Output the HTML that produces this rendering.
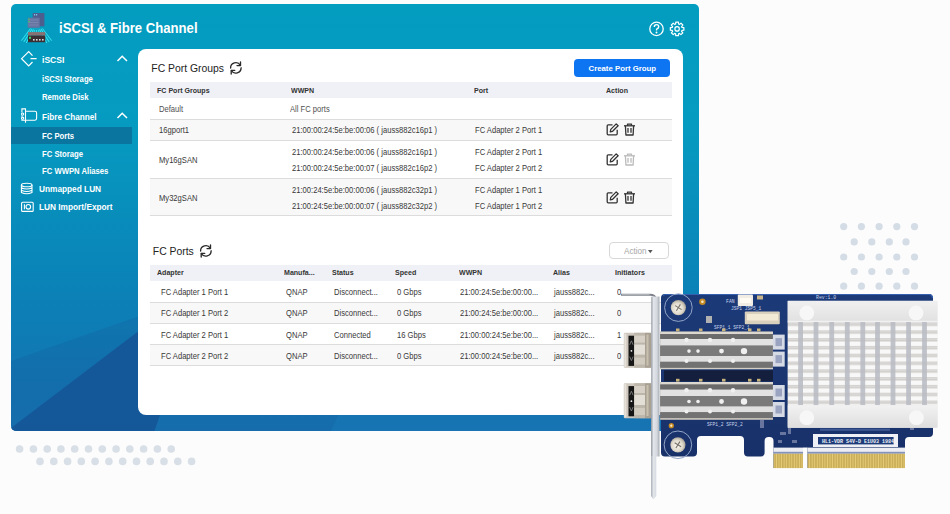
<!DOCTYPE html>
<html><head><meta charset="utf-8">
<style>
*{margin:0;padding:0;box-sizing:border-box}
html,body{width:950px;height:514px;overflow:hidden;background:#fcfcfc;font-family:"Liberation Sans",sans-serif}
.a{position:absolute;white-space:nowrap;transform-origin:0 0}
#panel{position:absolute;left:11px;top:4px;width:688px;height:427px;border-radius:5px;overflow:hidden;
 background:linear-gradient(180deg,#039dc0 0px,#069ac0 130px,#0a84b8 270px,#1275b2 380px,#1874b3 427px)}
.sb{color:#fff;font-weight:bold}
#card{position:absolute;left:138px;top:49px;width:545px;height:366px;border-radius:8px;background:#fff}
.hd{background:#eff1f6}
.ht{font-weight:bold;color:#333;font-size:8px;line-height:8px}
.tt{color:#444;font-size:7.6px;line-height:8px}
.gr{background:#f8f8f8}
.dv{position:absolute;height:1px;background:#dcdcdc;z-index:2}
</style></head><body>
<svg class="a" style="left:0;top:0" width="950" height="514">
<circle cx="843.7" cy="226.6" r="3.6" fill="#d4dce5"/>
<circle cx="861.4" cy="226.6" r="3.6" fill="#d4dce5"/>
<circle cx="879.1" cy="226.6" r="3.6" fill="#d4dce5"/>
<circle cx="896.8" cy="226.6" r="3.6" fill="#d4dce5"/>
<circle cx="914.5" cy="226.6" r="3.6" fill="#d4dce5"/>
<circle cx="854.2" cy="241.9" r="3.6" fill="#d4dce5"/>
<circle cx="871.8" cy="241.9" r="3.6" fill="#d4dce5"/>
<circle cx="889.3" cy="241.9" r="3.6" fill="#d4dce5"/>
<circle cx="906" cy="241.9" r="3.6" fill="#d4dce5"/>
<circle cx="843.7" cy="257" r="3.6" fill="#d4dce5"/>
<circle cx="861.4" cy="257" r="3.6" fill="#d4dce5"/>
<circle cx="879.1" cy="257" r="3.6" fill="#d4dce5"/>
<circle cx="896.8" cy="257" r="3.6" fill="#d4dce5"/>
<circle cx="914.5" cy="257" r="3.6" fill="#d4dce5"/>
<circle cx="854.2" cy="271.5" r="3.6" fill="#d4dce5"/>
<circle cx="871.8" cy="271.5" r="3.6" fill="#d4dce5"/>
<circle cx="889.3" cy="271.5" r="3.6" fill="#d4dce5"/>
<circle cx="906" cy="271.5" r="3.6" fill="#d4dce5"/>
<circle cx="843.7" cy="286.2" r="3.6" fill="#d4dce5"/>
<circle cx="861.4" cy="286.2" r="3.6" fill="#d4dce5"/>
<circle cx="879.1" cy="286.2" r="3.6" fill="#d4dce5"/>
<circle cx="896.8" cy="286.2" r="3.6" fill="#d4dce5"/>
<circle cx="914.5" cy="286.2" r="3.6" fill="#d4dce5"/>
<circle cx="19.6" cy="449" r="3.8" fill="#d8dfe6"/>
<circle cx="33.4" cy="449" r="3.8" fill="#d8dfe6"/>
<circle cx="47.2" cy="449" r="3.8" fill="#d8dfe6"/>
<circle cx="60.9" cy="449" r="3.8" fill="#d8dfe6"/>
<circle cx="74.7" cy="449" r="3.8" fill="#d8dfe6"/>
<circle cx="88.5" cy="449" r="3.8" fill="#d8dfe6"/>
<circle cx="102.3" cy="449" r="3.8" fill="#d8dfe6"/>
<circle cx="116.1" cy="449" r="3.8" fill="#d8dfe6"/>
<circle cx="129.8" cy="449" r="3.8" fill="#d8dfe6"/>
<circle cx="143.6" cy="449" r="3.8" fill="#d8dfe6"/>
<circle cx="157.4" cy="449" r="3.8" fill="#d8dfe6"/>
<circle cx="171.2" cy="449" r="3.8" fill="#d8dfe6"/>
<circle cx="40.0" cy="461.4" r="3.8" fill="#d8dfe6"/>
<circle cx="53.8" cy="461.4" r="3.8" fill="#d8dfe6"/>
<circle cx="67.6" cy="461.4" r="3.8" fill="#d8dfe6"/>
<circle cx="81.3" cy="461.4" r="3.8" fill="#d8dfe6"/>
<circle cx="95.1" cy="461.4" r="3.8" fill="#d8dfe6"/>
<circle cx="108.9" cy="461.4" r="3.8" fill="#d8dfe6"/>
<circle cx="122.7" cy="461.4" r="3.8" fill="#d8dfe6"/>
<circle cx="136.5" cy="461.4" r="3.8" fill="#d8dfe6"/>
<circle cx="150.2" cy="461.4" r="3.8" fill="#d8dfe6"/>
<circle cx="164.0" cy="461.4" r="3.8" fill="#d8dfe6"/>
<circle cx="177.8" cy="461.4" r="3.8" fill="#d8dfe6"/>
<circle cx="191.6" cy="461.4" r="3.8" fill="#d8dfe6"/>
</svg>
<div id="panel">
 <svg class="a" style="left:0;top:0" width="688" height="427">
  <polygon points="0,357 420,210 320,427 0,427" fill="#145f9c" opacity="0.28"/>
  <polygon points="0,424 179,288 191,288 143.5,427 0,427" fill="#15589a"/>
 </svg>
</div>

<!-- header -->
<svg class="a" style="left:18px;top:10px" width="36" height="36" viewBox="0 0 36 36">
 <g stroke="#35e6f0" stroke-width="1" fill="none">
  <path d="M12.5 18.5 L3.5 30.5" opacity="0.9"/><path d="M14 19 L5.8 32"/><path d="M15.5 19.5 L8.2 33"/>
  <path d="M24.5 18.5 L33.5 30.5" opacity="0.9"/><path d="M23 19 L31.2 32"/><path d="M21.5 19.5 L28.8 33"/>
  <path d="M16.5 20 L16 23 M18.5 20 V23 M20.5 20 L21 23" stroke-width="0.8"/>
 </g>
 <path d="M12 18 L24.5 18 L35 31 L2 31 Z" fill="#3ef0f0" opacity="0.12"/>
 <rect x="14.7" y="3" width="11.7" height="13.3" fill="#4d5d8e"/>
 <rect x="16" y="4.2" width="1.2" height="1.2" fill="#7fe0ff"/><rect x="18" y="4.2" width="1.2" height="1.2" fill="#7fe0ff"/>
 <rect x="9.7" y="7.7" width="12" height="10.1" fill="#6574a0"/>
 <path d="M10.5 10h10M10.5 12.5h10M10.5 15h10" stroke="#8592b8" stroke-width="0.6"/>
 <rect x="10.3" y="8.5" width="1.3" height="1.3" fill="#3cd26a"/><rect x="10.3" y="11" width="1.3" height="1.3" fill="#3cd26a"/>
 <rect x="10" y="22.1" width="17.2" height="3.5" fill="#8a7070"/>
 <rect x="10" y="25.6" width="17.2" height="6.6" fill="#3b2f33"/>
 <rect x="11" y="26.8" width="2" height="2" fill="#3cd26a"/>
 <g fill="#ddd"><rect x="15" y="29" width="1.6" height="1.6"/><rect x="18" y="29" width="1.6" height="1.6"/><rect x="21" y="29" width="1.6" height="1.6"/><rect x="24" y="29" width="1.6" height="1.6"/></g>
</svg>
<div class="a sb" style="left:59px;top:21px;font-size:14.5px;line-height:14.5px;transform:scaleX(0.905)">iSCSI &amp; Fibre Channel</div>
<svg class="a" style="left:646px;top:20px" width="42" height="20" viewBox="0 0 42 20">
 <circle cx="10.5" cy="8.9" r="6.7" fill="none" stroke="#fff" stroke-width="1.3"/>
 <path d="M8.3 6.9 Q8.3 4.6 10.5 4.6 Q12.7 4.6 12.7 6.7 Q12.7 8.1 11 8.9 Q10.5 9.2 10.5 10.5" fill="none" stroke="#fff" stroke-width="1.4"/>
 <circle cx="10.5" cy="12.5" r="0.95" fill="#fff"/>
 <g transform="translate(31.1 8.9)" fill="none" stroke="#fff" stroke-width="1.2" stroke-linejoin="round">
  <path d="M-1.49 -4.88 L-1.32 -6.77 L1.32 -6.77 L1.49 -4.88 L2.39 -4.50 L3.86 -5.72 L5.72 -3.86 L4.50 -2.39 L4.88 -1.49 L6.77 -1.32 L6.77 1.32 L4.88 1.49 L4.50 2.39 L5.72 3.86 L3.86 5.72 L2.39 4.50 L1.49 4.88 L1.32 6.77 L-1.32 6.77 L-1.49 4.88 L-2.39 4.50 L-3.86 5.72 L-5.72 3.86 L-4.50 2.39 L-4.88 1.49 L-6.77 1.32 L-6.77 -1.32 L-4.88 -1.49 L-4.50 -2.39 L-5.72 -3.86 L-3.86 -5.72 L-2.39 -4.50 Z"/>
  <circle r="2.2"/>
 </g>
</svg>
<!-- sidebar -->
<div class="a" style="left:11px;top:127.3px;width:121px;height:17px;background:#0a76a0"></div>
<svg class="a" style="left:18px;top:48px" width="24" height="170" viewBox="0 0 24 170">
 <g fill="none" stroke="#fff" stroke-width="1.2">
  <path d="M14.5 7.6 L10.7 3.6 L3.6 10.7 L10.7 17.8 L14.5 14 M12.5 10.7 H18.6"/>
 </g>
 <g fill="none" stroke="#fff" stroke-width="1.1">
  <path d="M7.5 63.3 H17 Q18.6 63.3 18.6 64.9 V70.6 Q18.6 72.2 17 72.2 H7.5"/>
  <path d="M7.5 60.3 V74.8 M7.5 60.9 H3.9 V64.6 M3.9 67.6 V68.8 M3.9 71.6 V72.3 H7.5"/>
  <circle cx="4.6" cy="66.1" r="1.1"/><circle cx="4.6" cy="70.2" r="1.1"/>
 </g>
 <g fill="none" stroke="#fff" stroke-width="1.1">
  <ellipse cx="8.7" cy="137" rx="5.3" ry="1.8"/>
  <path d="M3.4 137 V144.5 Q8.7 147 14 144.5 V137 M3.4 139.8 Q8.7 142.3 14 139.8 M3.4 142.2 Q8.7 144.7 14 142.2"/>
 </g>
 <g fill="none" stroke="#fff" stroke-width="1.1">
  <rect x="3.6" y="154.2" width="11.6" height="9.2" rx="1"/>
  <circle cx="10.3" cy="158.8" r="2.3"/>
  <path d="M6.4 156.3 v5" />
 </g>
</svg>
<svg class="a" style="left:112px;top:50px" width="20" height="80" viewBox="0 0 20 80">
 <path d="M5.5 11 L10.2 6.2 L15 11" fill="none" stroke="#fff" stroke-width="1.5"/>
 <path d="M5.5 68 L10.2 63.2 L15 68" fill="none" stroke="#fff" stroke-width="1.5"/>
</svg>
<div class="a sb" style="left:42px;top:55px;font-size:9.5px;line-height:9.5px;transform:scaleX(0.9)">iSCSI</div>
<div class="a sb" style="left:42px;top:75px;font-size:8.5px;line-height:8.5px;transform:scaleX(0.905)">iSCSI Storage</div>
<div class="a sb" style="left:42px;top:92.5px;font-size:8.5px;line-height:8.5px;transform:scaleX(0.905)">Remote Disk</div>
<div class="a sb" style="left:42px;top:112px;font-size:9.5px;line-height:9.5px;transform:scaleX(0.86)">Fibre Channel</div>
<div class="a sb" style="left:42px;top:132px;font-size:8.5px;line-height:8.5px;transform:scaleX(0.905)">FC Ports</div>
<div class="a sb" style="left:42px;top:149.8px;font-size:8.5px;line-height:8.5px;transform:scaleX(0.905)">FC Storage</div>
<div class="a sb" style="left:42px;top:167.4px;font-size:8.5px;line-height:8.5px;transform:scaleX(0.905)">FC WWPN Aliases</div>
<div class="a sb" style="left:39px;top:185px;font-size:9px;line-height:9px;transform:scaleX(0.92)">Unmapped LUN</div>
<div class="a sb" style="left:39px;top:203.3px;font-size:9px;line-height:9px;transform:scaleX(0.92)">LUN Import/Export</div>
<div id="card"></div>
<div class="a " style="left:151.3px;top:64.4px;font-size:10.4px;line-height:10.4px;color:#222;">FC Port Groups</div>
<svg class="a" style="left:229px;top:61px" width="14" height="14" viewBox="0 0 14 14"><g fill="none" stroke="#2a2a2a" stroke-width="1.35" stroke-linecap="round" stroke-linejoin="round"><path d="M1.6 7 A5.2 5.2 0 0 1 11.3 4.3"/><path d="M11.5 1 V4.6 H8"/><path d="M12.1 6.8 A5.2 5.2 0 0 1 2.4 9.5"/><path d="M2.2 13 V9.4 H5.7"/></g></svg>
<div class="a" style="left:574px;top:59px;width:95.8px;height:17.7px;border-radius:4px;background:#0d74f2"></div>
<div class="a " style="left:588.5px;top:64.6px;font-size:7.8px;line-height:7.8px;color:#fff;font-weight:bold;">Create Port Group</div>
<div class="a hd" style="left:150px;top:82px;width:522px;height:16.3px"></div>
<div class="a ht" style="left:157px;top:86.74px;font-size:7.6px;line-height:7.6px;transform:scaleX(0.93);">FC Port Groups</div>
<div class="a ht" style="left:290.5px;top:86.74px;font-size:7.6px;line-height:7.6px;transform:scaleX(0.93);">WWPN</div>
<div class="a ht" style="left:473.5px;top:86.74px;font-size:7.6px;line-height:7.6px;transform:scaleX(0.93);">Port</div>
<div class="a ht" style="left:606.2px;top:86.74px;font-size:7.6px;line-height:7.6px;transform:scaleX(0.93);">Action</div>
<div class="a gr" style="left:150px;top:119px;width:522px;height:21px"></div>
<div class="a gr" style="left:150px;top:178px;width:522px;height:37px"></div>
<div class="dv" style="left:150px;top:119px;width:522px"></div>
<div class="dv" style="left:150px;top:140px;width:522px"></div>
<div class="dv" style="left:150px;top:178px;width:522px"></div>
<div class="dv" style="left:150px;top:215px;width:522px"></div>
<div class="a " style="left:158.8px;top:104.79px;font-size:8.6px;line-height:8.6px;color:#505050;transform:scaleX(0.885);">Default</div>
<div class="a " style="left:290px;top:104.79px;font-size:8.6px;line-height:8.6px;color:#505050;transform:scaleX(0.885);">All FC ports</div>
<div class="a " style="left:158.9px;top:126.49px;font-size:8.6px;line-height:8.6px;color:#383838;transform:scaleX(0.885);">16gport1</div>
<div class="a " style="left:291.8px;top:126.49px;font-size:8.6px;line-height:8.6px;color:#383838;transform:scaleX(0.885);">21:00:00:24:5e:be:00:06 ( jauss882c16p1 )</div>
<div class="a " style="left:475.4px;top:126.49px;font-size:8.6px;line-height:8.6px;color:#383838;transform:scaleX(0.885);">FC Adapter 2 Port 1</div>
<svg class="a" style="left:606px;top:122.5px" width="13" height="13" viewBox="0 0 13 13"><g fill="none" stroke="#333" stroke-width="1.3" stroke-linejoin="round"><path d="M6.5 1.8 H2.2 Q1.2 1.8 1.2 2.8 V10.8 Q1.2 11.8 2.2 11.8 H10.2 Q11.2 11.8 11.2 10.8 V6.8"/><path d="M10.2 0.9 L12.1 2.8 L6.6 8.3 L4.3 8.8 L4.8 6.4 Z"/></g></svg>
<svg class="a" style="left:623px;top:122.5px" width="13" height="13" viewBox="0 0 13 13"><g fill="none" stroke="#333" stroke-width="1.3" stroke-linejoin="round"><path d="M1 2.8 H12"/><path d="M4.5 2.8 V1.2 H8.5 V2.8"/><path d="M2.4 2.8 L2.9 12 H10.1 L10.6 2.8"/><path d="M5 5 V9.8 M8 5 V9.8"/></g></svg>
<div class="a " style="left:158.9px;top:156.09px;font-size:8.6px;line-height:8.6px;color:#383838;transform:scaleX(0.885);">My16gSAN</div>
<div class="a " style="left:291.8px;top:147.89px;font-size:8.6px;line-height:8.6px;color:#383838;transform:scaleX(0.885);">21:00:00:24:5e:be:00:06 ( jauss882c16p1 )</div>
<div class="a " style="left:291.8px;top:164.29px;font-size:8.6px;line-height:8.6px;color:#383838;transform:scaleX(0.885);">21:00:00:24:5e:be:00:07 ( jauss882c16p2 )</div>
<div class="a " style="left:475.4px;top:147.89px;font-size:8.6px;line-height:8.6px;color:#383838;transform:scaleX(0.885);">FC Adapter 2 Port 1</div>
<div class="a " style="left:475.4px;top:164.29px;font-size:8.6px;line-height:8.6px;color:#383838;transform:scaleX(0.885);">FC Adapter 2 Port 2</div>
<svg class="a" style="left:606px;top:152.5px" width="13" height="13" viewBox="0 0 13 13"><g fill="none" stroke="#333" stroke-width="1.3" stroke-linejoin="round"><path d="M6.5 1.8 H2.2 Q1.2 1.8 1.2 2.8 V10.8 Q1.2 11.8 2.2 11.8 H10.2 Q11.2 11.8 11.2 10.8 V6.8"/><path d="M10.2 0.9 L12.1 2.8 L6.6 8.3 L4.3 8.8 L4.8 6.4 Z"/></g></svg>
<svg class="a" style="left:623px;top:152.5px" width="13" height="13" viewBox="0 0 13 13"><g fill="none" stroke="#bbb" stroke-width="1.3" stroke-linejoin="round"><path d="M1 2.8 H12"/><path d="M4.5 2.8 V1.2 H8.5 V2.8"/><path d="M2.4 2.8 L2.9 12 H10.1 L10.6 2.8"/><path d="M5 5 V9.8 M8 5 V9.8"/></g></svg>
<div class="a " style="left:158.9px;top:193.89px;font-size:8.6px;line-height:8.6px;color:#383838;transform:scaleX(0.885);">My32gSAN</div>
<div class="a " style="left:291.8px;top:185.89px;font-size:8.6px;line-height:8.6px;color:#383838;transform:scaleX(0.885);">21:00:24:5e:be:00:00:06 ( jauss882c32p1 )</div>
<div class="a " style="left:291.8px;top:202.09px;font-size:8.6px;line-height:8.6px;color:#383838;transform:scaleX(0.885);">21:00:24:5e:be:00:00:07 ( jauss882c32p2 )</div>
<div class="a " style="left:475.4px;top:185.89px;font-size:8.6px;line-height:8.6px;color:#383838;transform:scaleX(0.885);">FC Adapter 1 Port 1</div>
<div class="a " style="left:475.4px;top:202.09px;font-size:8.6px;line-height:8.6px;color:#383838;transform:scaleX(0.885);">FC Adapter 1 Port 2</div>
<svg class="a" style="left:606px;top:190.5px" width="13" height="13" viewBox="0 0 13 13"><g fill="none" stroke="#333" stroke-width="1.3" stroke-linejoin="round"><path d="M6.5 1.8 H2.2 Q1.2 1.8 1.2 2.8 V10.8 Q1.2 11.8 2.2 11.8 H10.2 Q11.2 11.8 11.2 10.8 V6.8"/><path d="M10.2 0.9 L12.1 2.8 L6.6 8.3 L4.3 8.8 L4.8 6.4 Z"/></g></svg>
<svg class="a" style="left:623px;top:190.5px" width="13" height="13" viewBox="0 0 13 13"><g fill="none" stroke="#333" stroke-width="1.3" stroke-linejoin="round"><path d="M1 2.8 H12"/><path d="M4.5 2.8 V1.2 H8.5 V2.8"/><path d="M2.4 2.8 L2.9 12 H10.1 L10.6 2.8"/><path d="M5 5 V9.8 M8 5 V9.8"/></g></svg>
<div class="a " style="left:152.8px;top:247.1px;font-size:10.4px;line-height:10.4px;color:#222;">FC Ports</div>
<svg class="a" style="left:198.5px;top:243.5px" width="14" height="14" viewBox="0 0 14 14"><g fill="none" stroke="#2a2a2a" stroke-width="1.35" stroke-linecap="round" stroke-linejoin="round"><path d="M1.6 7 A5.2 5.2 0 0 1 11.3 4.3"/><path d="M11.5 1 V4.6 H8"/><path d="M12.1 6.8 A5.2 5.2 0 0 1 2.4 9.5"/><path d="M2.2 13 V9.4 H5.7"/></g></svg>
<div class="a" style="left:609px;top:242.4px;width:59.7px;height:17px;border-radius:4px;border:1px solid #d8d8d8;background:#fff"></div>
<div class="a " style="left:624px;top:246.5px;font-size:8.8px;line-height:8.8px;color:#a6a6a6;transform:scaleX(0.92);">Action</div>
<svg class="a" style="left:647.8px;top:249.5px" width="5" height="4"><path d="M0 0 H4.6 L2.3 3.2 Z" fill="#555"/></svg>
<div class="a hd" style="left:150px;top:265px;width:522px;height:16px"></div>
<div class="a ht" style="left:156.9px;top:269.34px;font-size:7.6px;line-height:7.6px;transform:scaleX(0.93);">Adapter</div>
<div class="a ht" style="left:284.4px;top:269.34px;font-size:7.6px;line-height:7.6px;transform:scaleX(0.93);">Manufa...</div>
<div class="a ht" style="left:331.8px;top:269.34px;font-size:7.6px;line-height:7.6px;transform:scaleX(0.93);">Status</div>
<div class="a ht" style="left:395.4px;top:269.34px;font-size:7.6px;line-height:7.6px;transform:scaleX(0.93);">Speed</div>
<div class="a ht" style="left:458.5px;top:269.34px;font-size:7.6px;line-height:7.6px;transform:scaleX(0.93);">WWPN</div>
<div class="a ht" style="left:552.6px;top:269.34px;font-size:7.6px;line-height:7.6px;transform:scaleX(0.93);">Alias</div>
<div class="a ht" style="left:615.1px;top:269.34px;font-size:7.6px;line-height:7.6px;transform:scaleX(0.93);">Initiators</div>
<div class="dv" style="left:150px;top:302px;width:522px"></div>
<div class="a " style="left:161px;top:288.09px;font-size:8.6px;line-height:8.6px;color:#383838;transform:scaleX(0.885);">FC Adapter 1 Port 1</div>
<div class="a " style="left:286.3px;top:288.09px;font-size:8.6px;line-height:8.6px;color:#383838;transform:scaleX(0.885);">QNAP</div>
<div class="a " style="left:333.7px;top:288.09px;font-size:8.6px;line-height:8.6px;color:#383838;transform:scaleX(0.885);">Disconnect...</div>
<div class="a " style="left:396.7px;top:288.09px;font-size:8.6px;line-height:8.6px;color:#383838;transform:scaleX(0.885);">0 Gbps</div>
<div class="a " style="left:459.8px;top:288.09px;font-size:8.6px;line-height:8.6px;color:#383838;transform:scaleX(0.885);">21:00:24:5e:be:00:00...</div>
<div class="a " style="left:554.4px;top:288.09px;font-size:8.6px;line-height:8.6px;color:#383838;transform:scaleX(0.885);">jauss882c...</div>
<div class="a " style="left:617px;top:288.09px;font-size:8.6px;line-height:8.6px;color:#383838;transform:scaleX(0.885);">0</div>
<div class="a gr" style="left:150px;top:302px;width:522px;height:21.3px"></div>
<div class="dv" style="left:150px;top:323px;width:522px"></div>
<div class="a " style="left:161px;top:309.39px;font-size:8.6px;line-height:8.6px;color:#383838;transform:scaleX(0.885);">FC Adapter 1 Port 2</div>
<div class="a " style="left:286.3px;top:309.39px;font-size:8.6px;line-height:8.6px;color:#383838;transform:scaleX(0.885);">QNAP</div>
<div class="a " style="left:333.7px;top:309.39px;font-size:8.6px;line-height:8.6px;color:#383838;transform:scaleX(0.885);">Disconnect...</div>
<div class="a " style="left:396.7px;top:309.39px;font-size:8.6px;line-height:8.6px;color:#383838;transform:scaleX(0.885);">0 Gbps</div>
<div class="a " style="left:459.8px;top:309.39px;font-size:8.6px;line-height:8.6px;color:#383838;transform:scaleX(0.885);">21:00:24:5e:be:00:00...</div>
<div class="a " style="left:554.4px;top:309.39px;font-size:8.6px;line-height:8.6px;color:#383838;transform:scaleX(0.885);">jauss882c...</div>
<div class="a " style="left:617px;top:309.39px;font-size:8.6px;line-height:8.6px;color:#383838;transform:scaleX(0.885);">0</div>
<div class="dv" style="left:150px;top:344px;width:522px"></div>
<div class="a " style="left:161px;top:330.69px;font-size:8.6px;line-height:8.6px;color:#383838;transform:scaleX(0.885);">FC Adapter 2 Port 1</div>
<div class="a " style="left:286.3px;top:330.69px;font-size:8.6px;line-height:8.6px;color:#383838;transform:scaleX(0.885);">QNAP</div>
<div class="a " style="left:333.7px;top:330.69px;font-size:8.6px;line-height:8.6px;color:#383838;transform:scaleX(0.885);">Connected</div>
<div class="a " style="left:396.7px;top:330.69px;font-size:8.6px;line-height:8.6px;color:#383838;transform:scaleX(0.885);">16 Gbps</div>
<div class="a " style="left:459.8px;top:330.69px;font-size:8.6px;line-height:8.6px;color:#383838;transform:scaleX(0.885);">21:00:00:24:5e:be:00...</div>
<div class="a " style="left:554.4px;top:330.69px;font-size:8.6px;line-height:8.6px;color:#383838;transform:scaleX(0.885);">jauss882c...</div>
<div class="a " style="left:617px;top:330.69px;font-size:8.6px;line-height:8.6px;color:#383838;transform:scaleX(0.885);">1</div>
<div class="a gr" style="left:150px;top:344.5px;width:522px;height:21px"></div>
<div class="dv" style="left:150px;top:365.3px;width:522px"></div>
<div class="a " style="left:161px;top:351.99px;font-size:8.6px;line-height:8.6px;color:#383838;transform:scaleX(0.885);">FC Adapter 2 Port 2</div>
<div class="a " style="left:286.3px;top:351.99px;font-size:8.6px;line-height:8.6px;color:#383838;transform:scaleX(0.885);">QNAP</div>
<div class="a " style="left:333.7px;top:351.99px;font-size:8.6px;line-height:8.6px;color:#383838;transform:scaleX(0.885);">Disconnect...</div>
<div class="a " style="left:396.7px;top:351.99px;font-size:8.6px;line-height:8.6px;color:#383838;transform:scaleX(0.885);">0 Gbps</div>
<div class="a " style="left:459.8px;top:351.99px;font-size:8.6px;line-height:8.6px;color:#383838;transform:scaleX(0.885);">21:00:00:24:5e:be:00...</div>
<div class="a " style="left:554.4px;top:351.99px;font-size:8.6px;line-height:8.6px;color:#383838;transform:scaleX(0.885);">jauss882c...</div>
<div class="a " style="left:617px;top:351.99px;font-size:8.6px;line-height:8.6px;color:#383838;transform:scaleX(0.885);">0</div>

<svg class="a" style="left:0;top:0;z-index:5" width="950" height="514" viewBox="0 0 950 514">
<defs>
<linearGradient id="brk" x1="0" x2="1" y1="0" y2="0"><stop offset="0" stop-color="#aab0b8"/><stop offset="0.3" stop-color="#e2e5ea"/><stop offset="0.7" stop-color="#d4d8de"/><stop offset="1" stop-color="#a4a9b1"/></linearGradient>
<radialGradient id="scr" cx="0.45" cy="0.55" r="0.6"><stop offset="0" stop-color="#faf8f2"/><stop offset="0.6" stop-color="#e0dacd"/><stop offset="1" stop-color="#9c968a"/></radialGradient>
<pattern id="fins" x="787.8" y="326.4" width="20" height="7.8" patternUnits="userSpaceOnUse">
 <rect width="20" height="7.8" fill="#f8f8f8"/><rect y="4.3" width="20" height="1" fill="#bdbab6"/><rect y="5.3" width="20" height="0.9" fill="#dddbd8"/><rect y="6.2" width="20" height="1" fill="#c2bfbb"/>
</pattern>
<pattern id="gold" x="0" y="0" width="2.55" height="20" patternUnits="userSpaceOnUse">
 <rect width="2.55" height="20" fill="#bb9d48"/><rect x="0.5" width="1.5" height="20" fill="#e6cc76"/>
</pattern>
<linearGradient id="hstop" x1="0" y1="0" x2="0" y2="1"><stop offset="0" stop-color="#f0f0f0"/><stop offset="1" stop-color="#e0e0e0"/></linearGradient>
<linearGradient id="hsbot" x1="0" y1="0" x2="0" y2="1"><stop offset="0" stop-color="#f2f2f2"/><stop offset="1" stop-color="#dedede"/></linearGradient>
<linearGradient id="pcb" x1="0" y1="0" x2="0" y2="1"><stop offset="0" stop-color="#1c3a78"/><stop offset="1" stop-color="#183068"/></linearGradient>
</defs>
<path d="M665 294 H929 Q933 294 933 298 V433 Q933 437 929 437 H909 Q905 437 905 441 V468 H807.5 V447.5 H803 V468 H773.5 V441 Q773.5 437 769.5 437 H768.6 Q764.6 437 764.6 441 V452.5 Q764.6 456.5 760.6 456.5 H748 Q744 456.5 744 452.5 V440 Q744 436 740 436 H701 Q697 436 697 440 V452.5 Q697 456.5 693 456.5 H665 Q661 456.5 661 452.5 V298 Q661 294 665 294 Z" fill="url(#pcb)"/>
<path d="M663 295.5 Q664 294.5 666 294.5 H929 Q932 294.5 932.5 298" fill="none" stroke="#3560b0" stroke-width="1.2"/>
<rect x="773.5" y="447.6" width="29.5" height="6.2" fill="#eceef4"/>
<rect x="773.5" y="451.8" width="29.5" height="1.6" fill="#32488a" opacity="0.55"/>
<rect x="773.5" y="453.8" width="29.5" height="14.3" fill="url(#gold)"/>
<rect x="807.5" y="447.6" width="97.5" height="6.2" fill="#eceef4"/>
<rect x="807.5" y="451.8" width="97.5" height="1.6" fill="#32488a" opacity="0.55"/>
<rect x="807.5" y="453.8" width="97.5" height="14.3" fill="url(#gold)"/>
<rect x="813" y="434" width="85" height="13" fill="#eef0f6"/><rect x="818" y="437" width="75.6" height="7.4" fill="#1d3b78"/>
<text x="822" y="442.8" font-size="5" fill="#eef0f6" font-family="Liberation Mono" font-weight="bold">HL1-VDR S4V-D E1U03 1984</text>
<rect x="820" y="428.6" width="70" height="2.2" fill="#5a74b0" opacity="0.55"/>
<text x="816" y="298.8" font-size="4.8" fill="#c9d3ec" font-family="Liberation Mono">Rev:1.0</text>
<text x="726" y="303" font-size="4.8" fill="#c9d3ec" font-family="Liberation Mono">FAN</text>
<text x="731" y="309.8" font-size="4.6" fill="#c9d3ec" font-family="Liberation Mono">JSP1 JSP5_1</text>
<text x="714" y="328.5" font-size="4.6" fill="#c9d3ec" font-family="Liberation Mono">SFP1_1 SFP2_1</text>
<text x="707" y="426" font-size="4.6" fill="#c9d3ec" font-family="Liberation Mono">SFP1_2 SFP2_2</text>
<rect x="737.8" y="294.5" width="15.2" height="11.6" rx="1" fill="#f1ece4"/><rect x="740" y="298" width="11" height="5" fill="#fffaf2"/>
<rect x="757" y="295.5" width="6" height="4" fill="#c8b48a"/>
<rect x="744.8" y="311.5" width="35" height="12.8" rx="1" fill="#d9cfbd"/><rect x="747" y="314" width="31" height="6.5" fill="#f3ead6"/>
<rect x="706" y="316" width="6" height="7" fill="#d8d0c0" opacity="0.8"/>
<rect x="780" y="432" width="6" height="3" fill="#8a93b5" opacity="0.7"/>
<rect x="788" y="428" width="3" height="6" fill="#8a93b5" opacity="0.7"/>
<rect x="778" y="440" width="4" height="3" fill="#8a93b5" opacity="0.7"/>
<rect x="792" y="440" width="5" height="3" fill="#8a93b5" opacity="0.7"/>
<rect x="910" y="426" width="4" height="4" fill="#8a93b5" opacity="0.7"/>
<rect x="760" y="420" width="4" height="8" fill="#8a93b5" opacity="0.7"/>
<circle cx="678.4" cy="307.6" r="13.8" fill="none" stroke="#93a5c8" stroke-width="1"/>
<circle cx="678.4" cy="307.6" r="7.6" fill="url(#scr)"/>
<path d="M675.1999999999999 305.6 L681.6 309.6 M680.4 304.40000000000003 L676.4 310.8" stroke="#5a554c" stroke-width="1.1" opacity="0.8"/>
<circle cx="677.9" cy="444.8" r="13.8" fill="none" stroke="#93a5c8" stroke-width="1"/>
<circle cx="677.9" cy="444.8" r="7.6" fill="url(#scr)"/>
<path d="M674.6999999999999 442.8 L681.1 446.8 M679.9 441.6 L675.9 448.0" stroke="#5a554c" stroke-width="1.1" opacity="0.8"/>
<circle cx="702.4" cy="301.8" r="3.2" fill="#c68a22"/><circle cx="702.4" cy="301.8" r="1.3" fill="#f6ead0"/>
<circle cx="671.3" cy="425.7" r="2.6" fill="#c68a22"/><circle cx="671.3" cy="425.7" r="1.1" fill="#f6ead0"/>
<rect x="787.8" y="300.9" width="149.6" height="126.7" fill="#ededed"/>
<rect x="787.8" y="300.9" width="149.6" height="22.1" fill="#efefef"/>
<rect x="787.8" y="300.9" width="149.6" height="22.1" fill="url(#hstop)"/>
<rect x="787.8" y="320.8" width="149.6" height="1" fill="#f6f6f6"/>
<rect x="787.8" y="323" width="149.6" height="82.3" fill="url(#fins)"/>
<rect x="798.2" y="322" width="4.8" height="83.3" fill="#babcc4" opacity="0.9"/>
<rect x="813.6" y="322" width="4.8" height="83.3" fill="#babcc4" opacity="0.9"/>
<rect x="829.3000000000001" y="322" width="4.8" height="83.3" fill="#babcc4" opacity="0.9"/>
<rect x="844.9" y="322" width="4.8" height="83.3" fill="#babcc4" opacity="0.9"/>
<rect x="860.4" y="322" width="4.8" height="83.3" fill="#babcc4" opacity="0.9"/>
<rect x="875.1" y="322" width="4.8" height="83.3" fill="#babcc4" opacity="0.9"/>
<rect x="890.6" y="322" width="4.8" height="83.3" fill="#babcc4" opacity="0.9"/>
<rect x="906.2" y="322" width="4.8" height="83.3" fill="#babcc4" opacity="0.9"/>
<rect x="922.1" y="322" width="4.8" height="83.3" fill="#babcc4" opacity="0.9"/>
<rect x="787.8" y="405.3" width="149.6" height="22.3" fill="#e9e9e9"/>
<rect x="787.8" y="405.3" width="149.6" height="22.3" fill="url(#hsbot)"/>
<circle cx="806.8" cy="312.9" r="7.4" fill="#f7f7f7"/>
<circle cx="916" cy="312.9" r="7.4" fill="#f7f7f7"/>
<circle cx="806.8" cy="417.7" r="7.4" fill="#f7f7f7"/>
<circle cx="916.4" cy="417.7" r="7.4" fill="#f7f7f7"/>
<rect x="660.2" y="331.6" width="112.8" height="37.6" fill="#888"/>
<rect x="660.2" y="331.6" width="112.8" height="2.5" fill="#dcd8d0"/>
<rect x="660.2" y="339.0" width="112.8" height="6.6" fill="#e2e2e2"/>
<rect x="660.2" y="345.6" width="112.8" height="10.4" fill="#7a7a7a"/>
<rect x="660.2" y="356.0" width="112.8" height="5.8" fill="#e0e0e0"/>
<rect x="660.2" y="367.70000000000005" width="112.8" height="1.5" fill="#d3cfc6"/>
<rect x="660.2" y="334.1" width="112.8" height="4.9" fill="#6a6a6a"/>
<rect x="660.2" y="361.8" width="112.8" height="5.9" fill="#727272"/>
<circle cx="686.5" cy="339.90000000000003" r="2.2" fill="#f0f0f0"/>
<circle cx="710" cy="339.90000000000003" r="2.2" fill="#f0f0f0"/>
<circle cx="733" cy="339.90000000000003" r="2.2" fill="#f0f0f0"/>
<circle cx="686.5" cy="361.1" r="2" fill="#f0f0f0"/>
<circle cx="710" cy="361.1" r="2" fill="#f0f0f0"/>
<circle cx="733" cy="361.1" r="2" fill="#f0f0f0"/>
<circle cx="689" cy="351.1" r="1.8" fill="#f0f0f0"/>
<circle cx="698" cy="351.1" r="1.8" fill="#f0f0f0"/>
<circle cx="721.5" cy="351.1" r="2.4" fill="#f0f0f0"/>
<circle cx="744" cy="351.1" r="3.2" fill="#f0f0f0"/>
<rect x="772.9" y="334.6" width="11.8" height="15" fill="#d6dae4"/><rect x="772.9" y="351.6" width="11.8" height="15" fill="#d6dae4"/>
<rect x="775.5" y="338.1" width="6.5" height="8" fill="#9aa3bf"/><rect x="775.5" y="355.1" width="6.5" height="8" fill="#9aa3bf"/>
<rect x="623.8" y="332.8" width="27.4" height="35" rx="1.2" fill="#cdc7bd"/>
<rect x="624.3" y="333.6" width="2" height="33.4" fill="#e6e2da"/>
<rect x="628.5" y="335.70000000000005" width="5.8" height="30.2" fill="#161616"/>
<path d="M629.7 344.8 L631.4 340.8 L633.1 344.8 M629.7 356.6 L631.4 360.6 L633.1 356.6" fill="none" stroke="#8a8a8a" stroke-width="0.8"/>
<circle cx="631.4" cy="350.8" r="0.9" fill="#f4f4f4"/>
<rect x="634.3" y="332.8" width="10.7" height="35" fill="#bdb6aa"/>
<rect x="634.3" y="335.6" width="10.7" height="7" fill="#d6d0c6"/>
<rect x="634.3" y="344.6" width="10.7" height="10" fill="#e4dfd6"/>
<rect x="634.3" y="357.6" width="10.7" height="7" fill="#d0cabf"/>
<rect x="645" y="332.8" width="6.2" height="35" fill="#a8a092"/>
<rect x="646.5" y="334.6" width="2" height="31" fill="#c8bfae"/>
<rect x="660.2" y="382" width="112.8" height="37.6" fill="#888"/>
<rect x="660.2" y="382" width="112.8" height="2.5" fill="#dcd8d0"/>
<rect x="660.2" y="389.4" width="112.8" height="6.6" fill="#e2e2e2"/>
<rect x="660.2" y="396" width="112.8" height="10.4" fill="#7a7a7a"/>
<rect x="660.2" y="406.4" width="112.8" height="5.8" fill="#e0e0e0"/>
<rect x="660.2" y="418.1" width="112.8" height="1.5" fill="#d3cfc6"/>
<rect x="660.2" y="384.5" width="112.8" height="4.9" fill="#6a6a6a"/>
<rect x="660.2" y="412.2" width="112.8" height="5.9" fill="#727272"/>
<circle cx="686.5" cy="390.3" r="2.2" fill="#f0f0f0"/>
<circle cx="710" cy="390.3" r="2.2" fill="#f0f0f0"/>
<circle cx="733" cy="390.3" r="2.2" fill="#f0f0f0"/>
<circle cx="686.5" cy="411.5" r="2" fill="#f0f0f0"/>
<circle cx="710" cy="411.5" r="2" fill="#f0f0f0"/>
<circle cx="733" cy="411.5" r="2" fill="#f0f0f0"/>
<circle cx="689" cy="401.5" r="1.8" fill="#f0f0f0"/>
<circle cx="698" cy="401.5" r="1.8" fill="#f0f0f0"/>
<circle cx="721.5" cy="401.5" r="2.4" fill="#f0f0f0"/>
<circle cx="744" cy="401.5" r="3.2" fill="#f0f0f0"/>
<rect x="772.9" y="385" width="11.8" height="15" fill="#d6dae4"/><rect x="772.9" y="402" width="11.8" height="15" fill="#d6dae4"/>
<rect x="775.5" y="388.5" width="6.5" height="8" fill="#9aa3bf"/><rect x="775.5" y="405.5" width="6.5" height="8" fill="#9aa3bf"/>
<rect x="623.8" y="383.2" width="27.4" height="35" rx="1.2" fill="#cdc7bd"/>
<rect x="624.3" y="384" width="2" height="33.4" fill="#e6e2da"/>
<rect x="628.5" y="386.1" width="5.8" height="30.2" fill="#161616"/>
<path d="M629.7 395.2 L631.4 391.2 L633.1 395.2 M629.7 407 L631.4 411 L633.1 407" fill="none" stroke="#8a8a8a" stroke-width="0.8"/>
<circle cx="631.4" cy="401.2" r="0.9" fill="#f4f4f4"/>
<rect x="634.3" y="383.2" width="10.7" height="35" fill="#bdb6aa"/>
<rect x="634.3" y="386" width="10.7" height="7" fill="#d6d0c6"/>
<rect x="634.3" y="395" width="10.7" height="10" fill="#e4dfd6"/>
<rect x="634.3" y="408" width="10.7" height="7" fill="#d0cabf"/>
<rect x="645" y="383.2" width="6.2" height="35" fill="#a8a092"/>
<rect x="646.5" y="385" width="2" height="31" fill="#c8bfae"/>
<rect x="664" y="370.3" width="109" height="11" fill="#131f3c"/>
<rect x="676" y="378.8" width="3.5" height="2.8" fill="#c8b27c"/>
<rect x="699" y="378.8" width="3.5" height="2.8" fill="#c8b27c"/>
<rect x="722" y="378.8" width="3.5" height="2.8" fill="#c8b27c"/>
<rect x="748" y="378.8" width="3.5" height="2.8" fill="#c8b27c"/>
<rect x="757" y="378.8" width="3.5" height="2.8" fill="#c8b27c"/>
<rect x="676" y="328.5" width="3.5" height="2.8" fill="#c8b27c"/>
<rect x="699" y="328.5" width="3.5" height="2.8" fill="#c8b27c"/>
<rect x="722" y="328.5" width="3.5" height="2.8" fill="#c8b27c"/>
<rect x="748" y="328.5" width="3.5" height="2.8" fill="#c8b27c"/>
<rect x="757" y="328.5" width="3.5" height="2.8" fill="#c8b27c"/>
<path d="M621 294.8 H650 Q655.2 294.8 655.8 299" fill="none" stroke="#7e828a" stroke-width="2"/><path d="M622 294.6 H649.5" stroke="#c9cdd3" stroke-width="0.7"/>
<path d="M651.5 296.5 H659.5 V456.4 H656.3 V496 L653.5 499.5 L651 496 V456.4 Z" fill="url(#brk)"/>
<path d="M651.8 297 V456" stroke="#8a8e96" stroke-width="0.6"/>
</svg></body></html>
